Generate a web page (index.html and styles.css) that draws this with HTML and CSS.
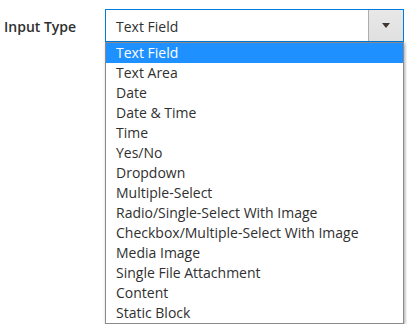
FILE: index.html
```html
<!DOCTYPE html>
<html>
<head>
<meta charset="utf-8">
<link rel="stylesheet" href="styles.css">
</head>
<body>
<div class="field">
  <label class="label">Input Type</label>
  <div class="control">
    <div class="select">
      <span class="value">Text Field</span>
      <span class="btn"><span class="arrow"></span></span>
    </div>
    <ul class="list">
      <li class="opt active">Text Field</li>
      <li class="opt">Text Area</li>
      <li class="opt">Date</li>
      <li class="opt">Date &amp; Time</li>
      <li class="opt">Time</li>
      <li class="opt">Yes/No</li>
      <li class="opt">Dropdown</li>
      <li class="opt">Multiple-Select</li>
      <li class="opt">Radio/Single-Select With Image</li>
      <li class="opt">Checkbox/Multiple-Select With Image</li>
      <li class="opt">Media Image</li>
      <li class="opt">Single File Attachment</li>
      <li class="opt">Content</li>
      <li class="opt">Static Block</li>
    </ul>
  </div>
</div>
</body>
</html>
```
FILE: styles.css
```css
html, body {
  margin: 0;
  padding: 0;
  background: #fff;
}
body {
  font-family: "Open Sans", "Liberation Sans", sans-serif;
  font-size: 14px;
  color: #303030;
}
.field {
  display: flex;
  padding: 9px 0 0 4px;
}
.label {
  width: 101px;
  font-weight: 600;
  line-height: 33px;
  padding-top: 1px;
  color: #303030;
}
.control {
  width: 299px;
}
.select {
  display: flex;
  height: 33px;
  box-sizing: border-box;
  border: 1px solid #007bdb;
  background: #fff;
}
.value {
  flex: 1;
  padding-left: 10px;
  line-height: 31px;
  padding-top: 1px;
}
.btn {
  width: 34px;
  border-left: 1px solid #adadad;
  background: linear-gradient(#e8e8e8, #e0e0e0);
  display: flex;
  align-items: center;
  justify-content: center;
}
.arrow {
  width: 0;
  height: 0;
  border-left: 4px solid transparent;
  border-right: 4px solid transparent;
  border-top: 5px solid #41362f;
}
.list {
  list-style: none;
  margin: 0;
  padding: 0;
  border: 1px solid #8a8a8a;
  box-shadow: 1px 1px 3px rgba(0,0,0,0.35);
  background: #fff;
}
.opt {
  height: 20px;
  line-height: 20px;
  padding-left: 10px;
  white-space: nowrap;
}
.opt.active {
  background: #1e90ff;
  color: #fff;
}
```
